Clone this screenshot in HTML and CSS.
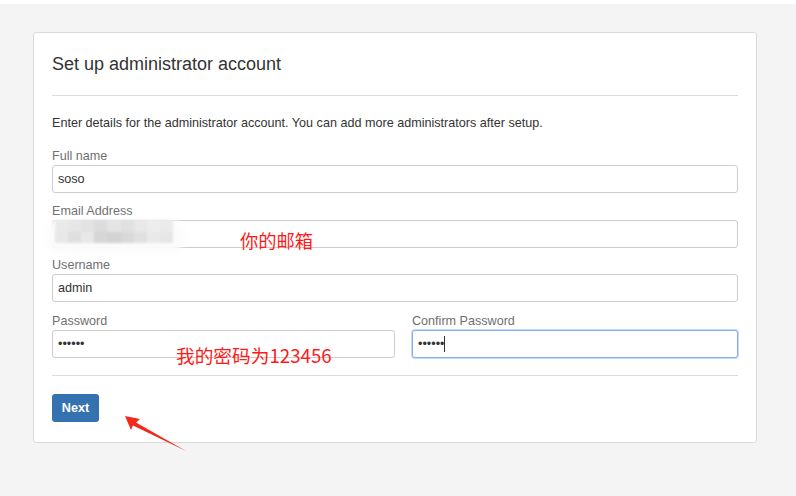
FILE: index.html
```html
<!DOCTYPE html>
<html lang="en">
<head>
<meta charset="utf-8">
<title>Set up administrator account</title>
<link rel="stylesheet" href="styles.css">
</head>
<body>
<div class="topstrip"></div>
<main class="page">
  <section class="card">
    <h2 class="title">Set up administrator account</h2>
    <hr class="rule">
    <p class="intro">Enter details for the administrator account. You can add more administrators after setup.</p>
    <form class="form">
      <div class="field">
        <label class="label" for="fullname">Full name</label>
        <input class="input" id="fullname" type="text" value="soso">
      </div>
      <div class="field field-email">
        <label class="label" for="email">Email Address</label>
        <input class="input" id="email" type="text" value="">
      </div>
      <div class="field field-user">
        <label class="label" for="username">Username</label>
        <input class="input" id="username" type="text" value="admin">
      </div>
      <div class="pw-row">
        <div class="field">
          <label class="label" for="pw">Password</label>
          <input class="input" id="pw" type="password" value="123456">
        </div>
        <div class="field">
          <label class="label" for="pw2">Confirm Password</label>
          <div class="input input-focus"><span class="dots">••••••</span><span class="caret"></span></div>
        </div>
      </div>
      <hr class="rule rule-bottom">
      <button class="btn-next" type="button">Next</button>
    </form>

    <div class="mosaic">
      <div class="halo"></div>
      <div class="cells">
        <i style="background:#e8e8e8"></i><i style="background:#e4e4e4"></i><i style="background:#e0e0e0"></i><i style="background:#d9d9d9"></i><i style="background:#e2e2e2"></i><i style="background:#dedede"></i><i style="background:#e6e6e6"></i><i style="background:#ececec"></i><i style="background:#e9e9e9"></i>
        <i style="background:#e6e6e6"></i><i style="background:#dcdcdc"></i><i style="background:#e6e6e6"></i><i style="background:#d2d2d2"></i><i style="background:#cfcfcf"></i><i style="background:#d6d6d6"></i><i style="background:#dedede"></i><i style="background:#e8e8e8"></i><i style="background:#e4e4e4"></i>
      </div>
    </div>
    <span class="note note-email">你的邮箱</span>
    <span class="note note-pw">我的密码为123456</span>
  </section>
</main>
<svg class="arrow" width="70" height="45" viewBox="0 0 70 45" aria-hidden="true">
  <polygon points="5,6 20,9 16,12.5 66,41 13,15.5 11,20" fill="#f5281c"/>
</svg>
</body>
</html>
```

FILE: styles.css
```css
html, body {
  margin: 0;
  padding: 0;
}
body {
  background: #f4f4f4;
  font-family: "Liberation Sans", Arial, sans-serif;
  color: #333;
  position: relative;
  min-height: 496px;
}
.topstrip {
  height: 4px;
  background: #fff;
}
.page {
  padding: 28px 0 0 33px;
}
.card {
  position: relative;
  box-sizing: border-box;
  width: 724px;
  background: #fff;
  border: 1px solid #d9d9d9;
  border-radius: 3px;
  padding: 19px 18px 20px;
}
.title {
  margin: 0;
  font-size: 18px;
  line-height: 24px;
  font-weight: normal;
  color: #333;
}
.rule {
  border: 0;
  border-top: 1px solid #dcdcdc;
  margin: 19px 0 0;
  height: 0;
}
.intro {
  margin: 18px 0 16px;
  font-size: 12.6px;
  line-height: 18px;
}
.form {
  margin: 0;
}
.field {
  display: flex;
  flex-direction: column;
  margin-bottom: 10px;
}
.field-email {
  margin-bottom: 9px;
}
.field-user {
  margin-bottom: 11px;
}
.label {
  font-size: 12.6px;
  line-height: 16px;
  color: #707070;
  margin-bottom: 1px;
}
.input {
  box-sizing: border-box;
  height: 28px;
  width: 100%;
  border: 1px solid #cdcdcd;
  border-radius: 3px;
  padding: 0 5px;
  font-family: "Liberation Sans", Arial, sans-serif;
  font-size: 12.6px;
  color: #333;
  background: #fff;
  outline: none;
}
.input-focus {
  display: flex;
  align-items: center;
  border-color: #86aef0;
  box-shadow: 0 0 0 1px #c4d8f8;
}
.dots {
  font-size: 12.6px;
  line-height: 1;
}
.caret {
  width: 1px;
  height: 16px;
  background: #333;
}
.pw-row {
  display: grid;
  grid-template-columns: 343px 1fr;
  column-gap: 17px;
}
.pw-row .field {
  margin-bottom: 0;
}
.rule-bottom {
  margin: 17px 0 18px;
}
.btn-next {
  display: block;
  width: 47px;
  height: 28px;
  padding: 0;
  border: 0;
  border-radius: 3px;
  background: #3572b0;
  color: #fff;
  font-family: "Liberation Sans", Arial, sans-serif;
  font-size: 12.6px;
  font-weight: bold;
}
.mosaic {
  position: absolute;
  left: 11px;
  top: 184px;
  width: 140px;
  height: 36px;
}
.halo {
  position: absolute;
  inset: 2px 0 0 0;
  background: #fbfbfb;
  border-radius: 18px;
  filter: blur(3px);
}
.cells {
  position: absolute;
  left: 10px;
  top: 3px;
  width: 118px;
  height: 23px;
  display: grid;
  grid-template-columns: repeat(9, 1fr);
  grid-template-rows: repeat(2, 1fr);
  filter: blur(1px);
  opacity: 0.9;
}
.cells i {
  display: block;
}
.note {
  position: absolute;
  font-family: "Noto Sans CJK SC", "Liberation Sans", sans-serif;
  font-size: 18.3px;
  line-height: 18px;
  color: #ff1a1a;
  white-space: nowrap;
}
.note-email {
  left: 206px;
  top: 198px;
}
.note-pw {
  left: 142px;
  top: 313px;
  font-size: 18.7px;
}
.arrow {
  position: absolute;
  left: 120px;
  top: 410px;
}
```
